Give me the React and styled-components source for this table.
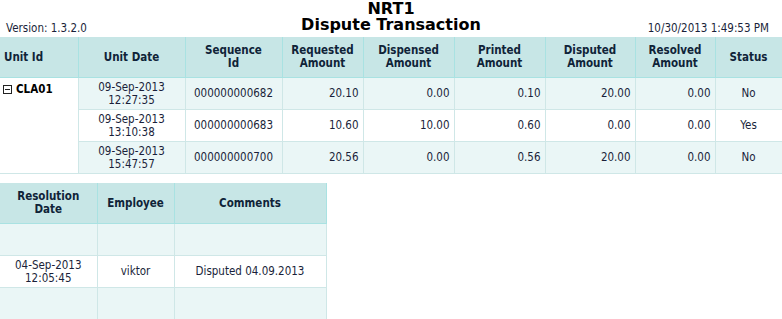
import styled, { createGlobalStyle } from 'styled-components';

const GlobalStyle = createGlobalStyle`
  body {
    margin: 0;
    background: #ffffff;
    font-family: "DejaVu Sans Condensed", "DejaVu Sans", sans-serif;
    color: #1a1f3a;
  }
`;

const Page = styled.div`
  width: 782px;
`;

const TopBar = styled.div`
  display: grid;
  grid-template-columns: 1fr auto 1fr;
  align-items: end;
  height: 37px;
  box-sizing: border-box;
  padding-bottom: 4px;
`;

const Version = styled.div`
  font-size: 11.5px;
  padding-left: 6px;
  margin-bottom: -2px;
`;

const Stamp = styled.div`
  font-size: 11.5px;
  text-align: right;
  padding-right: 13px;
  margin-bottom: -2px;
`;

const Title = styled.div`
  text-align: center;
  font-family: "DejaVu Sans", sans-serif;
  font-weight: bold;
  font-size: 16px;
  line-height: 16px;
  color: #000;
`;

const TitleLine = styled.div`
  height: 16px;
`;

const Grid = styled.table`
  border-collapse: collapse;
  table-layout: fixed;
  width: ${p => p.$width}px;
  font-size: 11.5px;
`;

const Head = styled.th`
  background: #c7e6e6;
  color: #0f2338;
  font-weight: bold;
  height: 40px;
  padding: 0 4px;
  border: 1px solid #a9e2e2;
  border-top: none;
  text-align: ${p => p.$align || 'center'};
  line-height: 13px;
  vertical-align: middle;
  &:first-child { border-left: none; }
`;

const Row = styled.tr`
  height: 32px;
  background: ${p => (p.$alt ? '#eaf6f6' : '#ffffff')};
`;

const Cell = styled.td`
  border: 1px solid #cfe7e7;
  padding: 0 4px;
  text-align: ${p => p.$align || 'center'};
  line-height: 13px;
  vertical-align: middle;
  white-space: nowrap;
  &:first-child { border-left: none; }
`;

const UnitCell = styled.td`
  background: #ffffff;
  border: 1px solid #cfe7e7;
  border-left: none;
  vertical-align: top;
  padding: 4px 3px;
  font-weight: bold;
  color: #000;
`;

const Toggle = styled.span`
  display: inline-block;
  position: relative;
  width: 7px;
  height: 7px;
  border: 1px solid #222;
  margin-right: 4px;
  vertical-align: -1px;
  &::after {
    content: '';
    position: absolute;
    left: 1px;
    right: 1px;
    top: 3px;
    height: 1px;
    background: #222;
  }
`;

const Gap = styled.div`
  height: 9px;
`;

const transactions = [
  { date: '09-Sep-2013', time: '12:27:35', seq: '000000000682', req: '20.10', disp: '0.00', print: '0.10', dispute: '20.00', res: '0.00', status: 'No' },
  { date: '09-Sep-2013', time: '13:10:38', seq: '000000000683', req: '10.60', disp: '10.00', print: '0.60', dispute: '0.00', res: '0.00', status: 'Yes' },
  { date: '09-Sep-2013', time: '15:47:57', seq: '000000000700', req: '20.56', disp: '0.00', print: '0.56', dispute: '20.00', res: '0.00', status: 'No' },
];

const resolutions = [
  null,
  { date: '04-Sep-2013', time: '12:05:45', employee: 'viktor', comment: 'Disputed 04.09.2013' },
  null,
];

const mainCols = [78, 107, 97, 81, 91, 91, 90, 80, 67];
const resCols = [97, 77, 152];

export default function App() {
  return (
    <Page>
      <GlobalStyle />
      <TopBar>
        <Version>Version: 1.3.2.0</Version>
        <Title>
          <TitleLine>NRT1</TitleLine>
          <TitleLine>Dispute Transaction</TitleLine>
        </Title>
        <Stamp>10/30/2013 1:49:53 PM</Stamp>
      </TopBar>

      <Grid $width={782}>
        <colgroup>
          {mainCols.map((w, i) => <col key={i} style={{ width: w }} />)}
        </colgroup>
        <thead>
          <tr>
            <Head $align="left">Unit Id</Head>
            <Head>Unit Date</Head>
            <Head>Sequence<br />Id</Head>
            <Head>Requested<br />Amount</Head>
            <Head>Dispensed<br />Amount</Head>
            <Head>Printed<br />Amount</Head>
            <Head>Disputed<br />Amount</Head>
            <Head>Resolved<br />Amount</Head>
            <Head>Status</Head>
          </tr>
        </thead>
        <tbody>
          {transactions.map((t, i) => (
            <Row key={t.seq} $alt={i % 2 === 0}>
              {i === 0 && (
                <UnitCell rowSpan={3}>
                  <Toggle />CLA01
                </UnitCell>
              )}
              <Cell>{t.date}<br />{t.time}</Cell>
              <Cell>{t.seq}</Cell>
              <Cell $align="right">{t.req}</Cell>
              <Cell $align="right">{t.disp}</Cell>
              <Cell $align="right">{t.print}</Cell>
              <Cell $align="right">{t.dispute}</Cell>
              <Cell $align="right">{t.res}</Cell>
              <Cell>{t.status}</Cell>
            </Row>
          ))}
        </tbody>
      </Grid>

      <Gap />

      <Grid $width={326}>
        <colgroup>
          {resCols.map((w, i) => <col key={i} style={{ width: w }} />)}
        </colgroup>
        <thead>
          <tr>
            <Head>Resolution<br />Date</Head>
            <Head>Employee</Head>
            <Head>Comments</Head>
          </tr>
        </thead>
        <tbody>
          {resolutions.map((r, i) => (
            <Row key={i} $alt={i % 2 === 0}>
              <Cell>{r && <>{r.date}<br />{r.time}</>}</Cell>
              <Cell>{r && r.employee}</Cell>
              <Cell>{r && r.comment}</Cell>
            </Row>
          ))}
        </tbody>
      </Grid>
    </Page>
  );
}
